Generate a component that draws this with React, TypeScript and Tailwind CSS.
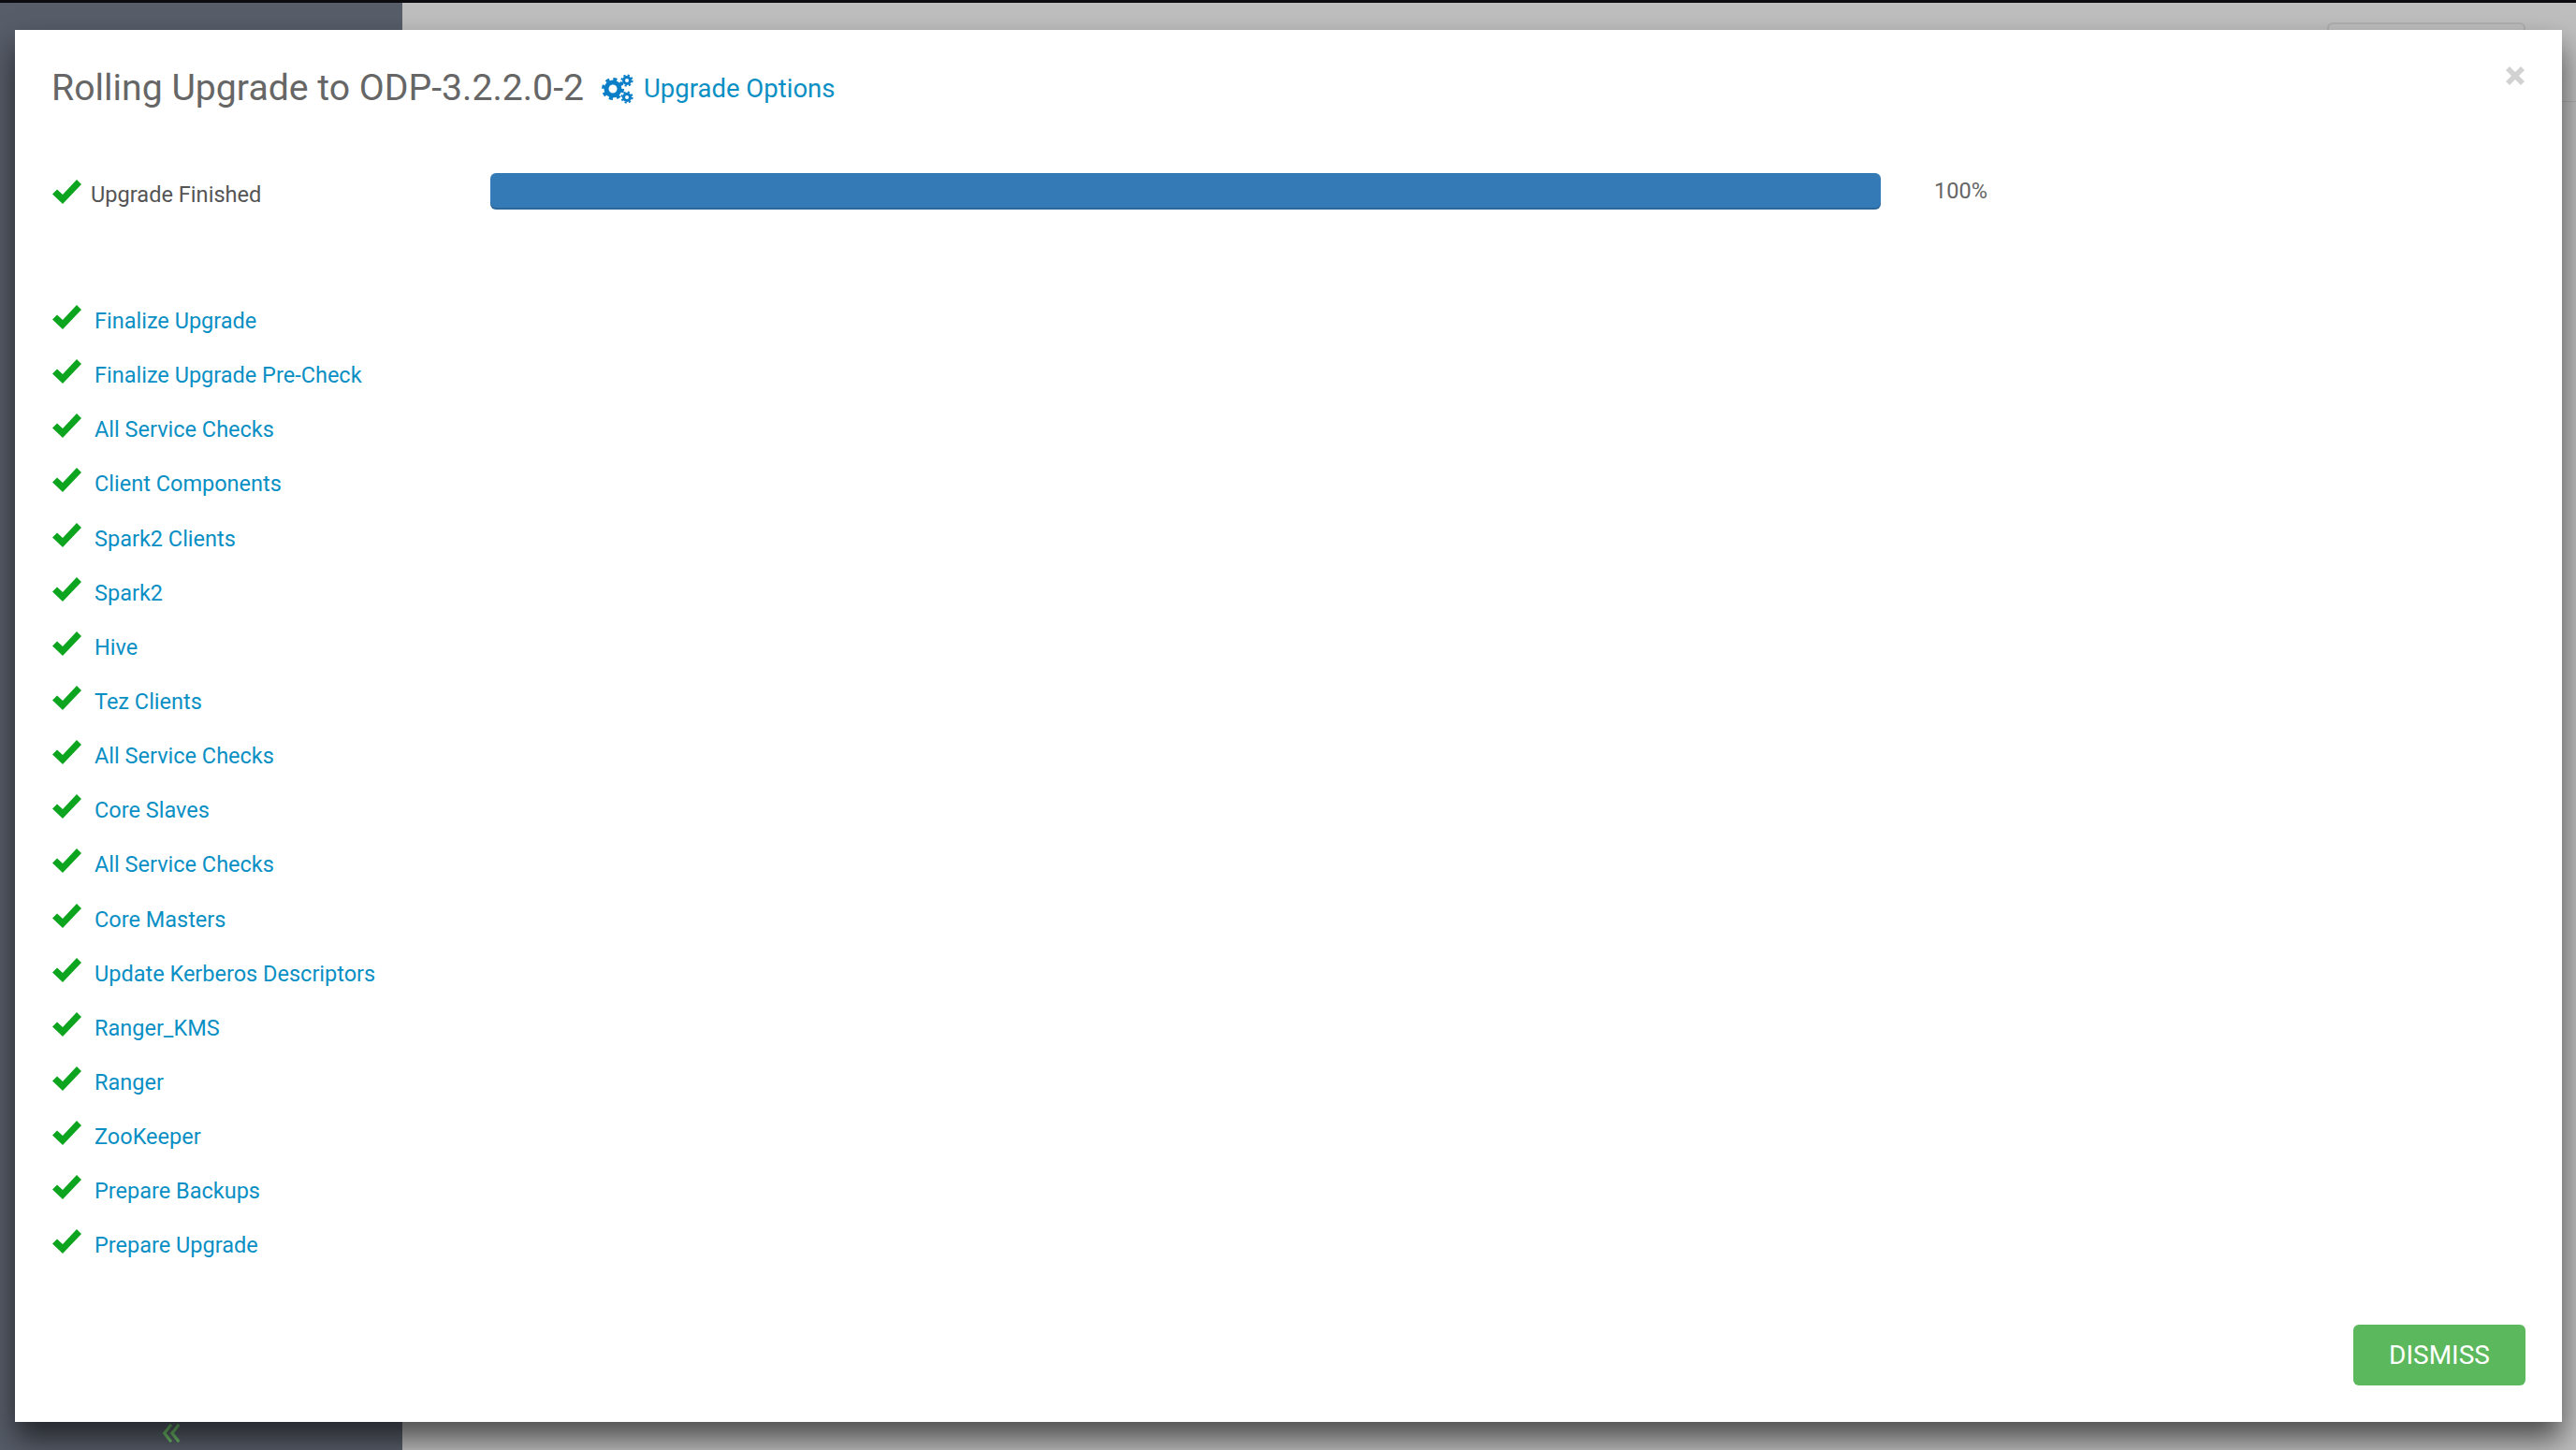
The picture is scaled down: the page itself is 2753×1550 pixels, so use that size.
const steps = [
  "Finalize Upgrade",
  "Finalize Upgrade Pre-Check",
  "All Service Checks",
  "Client Components",
  "Spark2 Clients",
  "Spark2",
  "Hive",
  "Tez Clients",
  "All Service Checks",
  "Core Slaves",
  "All Service Checks",
  "Core Masters",
  "Update Kerberos Descriptors",
  "Ranger_KMS",
  "Ranger",
  "ZooKeeper",
  "Prepare Backups",
  "Prepare Upgrade",
];

function Check() {
  return (
    <svg viewBox="0 0 31 26" className="h-[26px] w-[31px] shrink-0 fill-[#0da51f]">
      <path d="M26 0 L31 5 L11.5 25.5 Q11 26 10.5 25.5 L0 15.5 L5 10.5 L11 16 Z" />
    </svg>
  );
}

function Cogs() {
  return (
    <svg viewBox="0 0 34 32" className="h-[32px] w-[34px] shrink-0 fill-none stroke-[#0a7fc8]">
      <circle cx="12" cy="16" r="7" strokeWidth="5" />
      <circle cx="12" cy="16" r="10.5" strokeWidth="3" strokeDasharray="4.1 4.15" />
      <circle cx="27" cy="7" r="3.5" strokeWidth="3" />
      <circle cx="27" cy="7" r="5.6" strokeWidth="2" strokeDasharray="2.2 2.2" />
      <circle cx="27" cy="25" r="3.5" strokeWidth="3" />
      <circle cx="27" cy="25" r="5.6" strokeWidth="2" strokeDasharray="2.2 2.2" />
    </svg>
  );
}

export default function App() {
  return (
    <div className="relative h-[1550px] w-[2753px] overflow-hidden bg-[#bdbdbd] font-['Roboto',sans-serif]">
      <div className="h-[3px] bg-[#0c0c0e]" />
      <div className="flex h-[1547px]">
        <aside className="flex w-[430px] flex-col items-center justify-end bg-[#575d69] pb-[7px]">
          <svg viewBox="0 0 22 24" className="mr-[64px] h-[22px] w-[22px] fill-none stroke-[#6fc06a] stroke-[3.5]">
            <path d="M11 2 L3 12 L11 22 M20 2 L12 12 L20 22" />
          </svg>
        </aside>
        <main className="flex-1 bg-[#bebebe]">
          <div className="flex h-[106px] justify-end border-b border-[#adadad] pr-[54px] pt-[21px]">
            <div className="h-[40px] w-[212px] rounded-[6px] border-2 border-[#aeaeae]" />
          </div>
        </main>
      </div>
      <div className="absolute left-[16px] top-[32px] flex h-[1488px] w-[2722px] flex-col bg-white pl-[40px] pr-[39px] shadow-[0_18px_30px_rgba(0,0,0,0.6)]">
        <header className="flex h-[126px] items-center gap-[19px]">
          <h1 className="ml-[-1px] text-[39.2px] leading-none font-normal text-[#666666]">Rolling Upgrade to ODP-3.2.2.0-2</h1>
          <a className="flex items-center gap-[11px] text-[27.5px] leading-none text-[#0a8fc4]">
            <Cogs />
            <span className="mt-[-1px]">Upgrade Options</span>
          </a>
        </header>
        <button className="absolute right-[40px] top-[39px] text-[#d2d2d2]" aria-label="Close">
          <svg viewBox="0 0 20 20" className="h-[20px] w-[20px] fill-current">
            <path d="M4 0 L10 6 L16 0 L20 4 L14 10 L20 16 L16 20 L10 14 L4 20 L0 16 L6 10 L0 4 Z" />
          </svg>
        </button>
        <section className="mt-[27px] flex h-[39px] items-center">
          <div className="flex w-[468px] items-center gap-[10px]">
            <Check />
            <span className="mt-[8px] text-[23.6px] leading-none text-[#555555]">Upgrade Finished</span>
          </div>
          <div className="h-[39px] w-[1486px] rounded-[6px] bg-[#337ab7] shadow-[inset_0_-2px_0_rgba(0,0,0,0.15)]" />
          <span className="ml-[57px] text-[23.6px] leading-none text-[#666666]">100%</span>
        </section>
        <ul className="mt-[102px] flex flex-col">
          {steps.map((s, i) => (
            <li key={i} className="flex h-[58.15px] items-start gap-[14px]">
              <Check />
              <a className="mt-[3px] text-[23.5px] leading-[28px] text-[#0a8fc4]">{s}</a>
            </li>
          ))}
        </ul>
        <footer className="mt-auto flex justify-end pb-[39px]">
          <button className="h-[65px] w-[184px] rounded-[6px] bg-[#5cb85c] text-[28px] text-white">DISMISS</button>
        </footer>
      </div>
    </div>
  );
}
